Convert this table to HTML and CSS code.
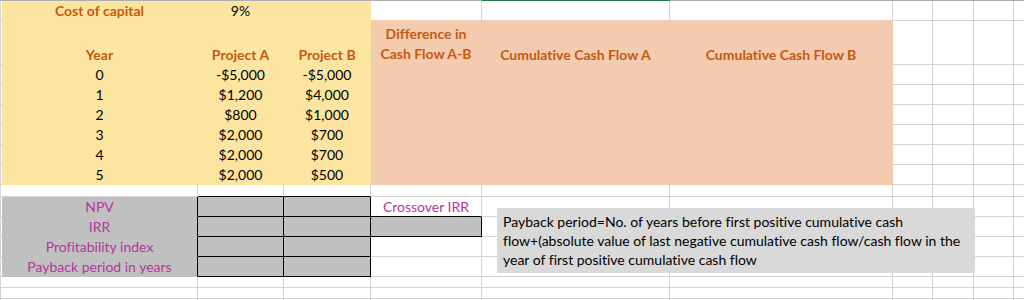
FILE: index.html
```html
<!DOCTYPE html>
<html>
<head>
<meta charset="utf-8">
<title>Capital budgeting sheet</title>
<link rel="stylesheet" href="styles.css">
</head>
<body>
<div class="sheet">
  <div class="grid">
    <div class="tl tl-a"></div><div class="tl tl-sel"></div><div class="tl tl-b"></div>

    <div class="e"></div>
    <div class="c y hd">Cost of capital</div>
    <div class="c y">9%</div>
    <div class="c y"></div>
    <div class="c pb"></div><div class="c pb"></div><div class="c pb"></div>
    <div class="c"></div><div class="c"></div><div class="c"></div><div class="c"></div>

    <div class="e"></div>
    <div class="c y hd">Year</div>
    <div class="c y hd">Project A</div>
    <div class="c y hd">Project B</div>
    <div class="c p hd two">Difference in<br>Cash Flow A-B</div>
    <div class="c p hd">Cumulative Cash Flow A</div>
    <div class="c p hd">Cumulative Cash Flow B</div>
    <div class="c"></div><div class="c"></div><div class="c"></div><div class="c"></div>

    <div class="e"></div>
    <div class="c y">0</div><div class="c y">-$5,000</div><div class="c y">-$5,000</div>
    <div class="c p"></div><div class="c p"></div><div class="c p"></div>
    <div class="c"></div><div class="c"></div><div class="c"></div><div class="c"></div>

    <div class="e"></div>
    <div class="c y">1</div><div class="c y">$1,200</div><div class="c y">$4,000</div>
    <div class="c p"></div><div class="c p"></div><div class="c p"></div>
    <div class="c"></div><div class="c"></div><div class="c"></div><div class="c"></div>

    <div class="e"></div>
    <div class="c y">2</div><div class="c y">$800</div><div class="c y">$1,000</div>
    <div class="c p"></div><div class="c p"></div><div class="c p"></div>
    <div class="c"></div><div class="c"></div><div class="c"></div><div class="c"></div>

    <div class="e"></div>
    <div class="c y">3</div><div class="c y">$2,000</div><div class="c y">$700</div>
    <div class="c p"></div><div class="c p"></div><div class="c p"></div>
    <div class="c"></div><div class="c"></div><div class="c"></div><div class="c"></div>

    <div class="e"></div>
    <div class="c y">4</div><div class="c y">$2,000</div><div class="c y">$700</div>
    <div class="c p"></div><div class="c p"></div><div class="c p"></div>
    <div class="c"></div><div class="c"></div><div class="c"></div><div class="c"></div>

    <div class="e"></div>
    <div class="c y">5</div><div class="c y">$2,000</div><div class="c y">$500</div>
    <div class="c p"></div><div class="c p"></div><div class="c p"></div>
    <div class="c"></div><div class="c"></div><div class="c"></div><div class="c"></div>

    <div class="e"></div>
    <div class="c"></div><div class="c bb"></div><div class="c bb"></div>
    <div class="c"></div><div class="c"></div><div class="c"></div>
    <div class="c"></div><div class="c"></div><div class="c"></div><div class="c"></div>

    <div class="e"></div>
    <div class="c lbl">NPV</div><div class="c box"></div><div class="c box"></div>
    <div class="c pu bb">Crossover IRR</div><div class="c"></div><div class="c"></div>
    <div class="c"></div><div class="c"></div><div class="c"></div><div class="c"></div>

    <div class="e"></div>
    <div class="c lbl">IRR</div><div class="c box"></div><div class="c box"></div>
    <div class="c box"></div><div class="c"></div><div class="c"></div>
    <div class="c"></div><div class="c"></div><div class="c"></div><div class="c"></div>

    <div class="e"></div>
    <div class="c lbl">Profitability index</div><div class="c box"></div><div class="c box"></div>
    <div class="c"></div><div class="c"></div><div class="c"></div>
    <div class="c"></div><div class="c"></div><div class="c"></div><div class="c"></div>

    <div class="e"></div>
    <div class="c lbl">Payback period in years</div><div class="c box"></div><div class="c box"></div>
    <div class="c"></div><div class="c"></div><div class="c"></div>
    <div class="c"></div><div class="c"></div><div class="c"></div><div class="c"></div>

    <div class="e"></div>
    <div class="c"></div><div class="c"></div><div class="c"></div><div class="c"></div><div class="c"></div>
    <div class="c"></div><div class="c"></div><div class="c"></div><div class="c"></div><div class="c"></div>

    <div class="e"></div>
    <div class="c"></div><div class="c"></div><div class="c"></div><div class="c"></div><div class="c"></div>
    <div class="c"></div><div class="c"></div><div class="c"></div><div class="c"></div><div class="c"></div>

    <div class="e"></div>
    <div class="c"></div><div class="c"></div><div class="c"></div><div class="c"></div><div class="c"></div>
    <div class="c"></div><div class="c"></div><div class="c"></div><div class="c"></div><div class="c"></div>
  </div>

  <div class="note">Payback period=No. of years before first positive cumulative cash<br>flow+(absolute value of last negative cumulative cash flow/cash flow in the<br>year of first positive cumulative cash flow</div>
</div>
</body>
</html>
```

FILE: styles.css
```css
* { box-sizing: border-box; }
html, body { margin: 0; padding: 0; background: #fff; }
body {
  font-family: Lato, "Open Sans", sans-serif;
  font-size: 14px;
  font-variant-ligatures: none;
  color: #000;
}
.sheet {
  position: relative;
  width: 1024px;
  height: 300px;
  overflow: hidden;
}
.grid {
  display: grid;
  grid-template-columns: 2px 196px 86px 87px 111px 188px 223px 40px 41px 40px 11px;
  grid-template-rows: 1px 20px 44px repeat(6, 20px) 12px repeat(4, 20px) 11px 11px 20px;
}
.tl { background: #aeaeae; }
.tl-a, .tl-b { grid-column: span 5; }
.tl-sel { background: #217346; }

.e {
  border-left: 1px solid #d4d4d4;
  border-bottom: 1px solid #d4d4d4;
}
.c {
  border-right: 1px solid #d4d4d4;
  border-bottom: 1px solid #d4d4d4;
  display: flex;
  align-items: flex-end;
  justify-content: center;
  text-align: center;
  line-height: 19px;
  white-space: nowrap;
}
.y { background: #fce5a0; border-color: #fce5a0; }
.p { background: #f3cbaf; border-color: #f3cbaf; }
.pb { border-bottom-color: #f3cbaf; }
.hd { font-weight: 700; color: #c55a11; }
.two { line-height: 20px; }
.lbl {
  background: #c0c0c0;
  border-color: #c0c0c0;
  border-right-color: #000;
  color: #b2379f;
}
.box { background: #c0c0c0; border-color: #000; }
.bb { border-bottom-color: #000; }
.pu { color: #b2379f; }

.note {
  position: absolute;
  left: 497px;
  top: 208px;
  width: 478px;
  height: 65px;
  background: #d9d9d9;
  padding: 4px 6px;
  line-height: 19px;
  white-space: nowrap;
}
```
